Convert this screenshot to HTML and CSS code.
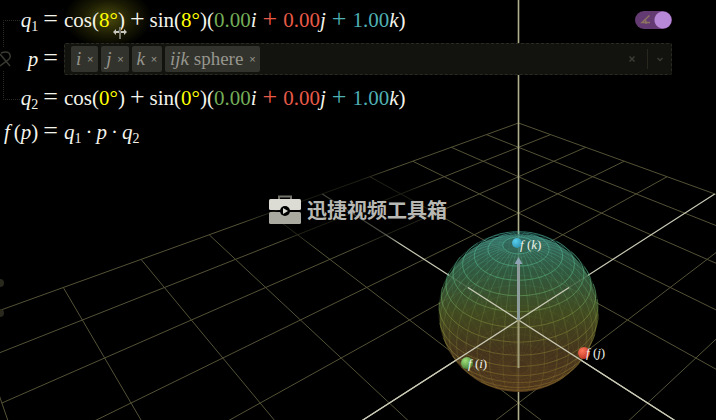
FILE: index.html
```html
<!DOCTYPE html>
<html lang="en">
<head>
<meta charset="utf-8">
<title>Quaternion explorer</title>
<link rel="stylesheet" href="styles.css">
</head>
<body>
<svg class="scene" viewBox="0 0 716 420" preserveAspectRatio="xMidYMid slice" aria-hidden="true">
  <defs>
    <linearGradient id="body" x1="0" y1="0" x2="0" y2="1">
      <stop offset="0" stop-color="#3a7a70"/>
      <stop offset="0.25" stop-color="#386446"/>
      <stop offset="0.5" stop-color="#4a5424"/>
      <stop offset="0.75" stop-color="#4e3a20"/>
      <stop offset="1" stop-color="#5a3e20"/>
    </linearGradient>
    <linearGradient id="wire" gradientUnits="userSpaceOnUse" x1="0" y1="233" x2="0" y2="392">
      <stop offset="0" stop-color="#4fc0b0"/>
      <stop offset="0.3" stop-color="#5fbf80"/>
      <stop offset="0.55" stop-color="#86903a"/>
      <stop offset="1" stop-color="#8a6a28"/>
    </linearGradient>
    <radialGradient id="green" cx="0.35" cy="0.3" r="0.8">
      <stop offset="0" stop-color="#a0e07c"/><stop offset="1" stop-color="#3f7a30"/>
    </radialGradient>
    <radialGradient id="red" cx="0.35" cy="0.3" r="0.8">
      <stop offset="0" stop-color="#ff7a5c"/><stop offset="1" stop-color="#b82c1c"/>
    </radialGradient>
    <radialGradient id="blue" cx="0.35" cy="0.3" r="0.8">
      <stop offset="0" stop-color="#58d0f0"/><stop offset="1" stop-color="#2c8ca8"/>
    </radialGradient>
    <radialGradient id="shade">
      <stop offset="0" stop-opacity="0.75"/><stop offset="0.7" stop-opacity="0.6"/><stop offset="1" stop-opacity="0"/>
    </radialGradient>
  </defs>
  <path id="grid" class="grid"/>
  <path id="axes" class="axis"/>
  <ellipse cx="345" cy="208" rx="110" ry="42" fill="url(#shade)"/>
  <path id="pole" class="pole"/>
  <circle class="ball" cx="518.5" cy="313" r="79"/>
  <path id="wireBack" class="wire wire-back"/>
  <path id="wireRings" class="wire wire-rings"/>
  <path id="wireLines" class="wire wire-lines"/>
  <path id="inner" class="axis"/>
  <path class="arrow" d="M518.5 320V263"/>
  <path class="arrow-tip" d="M518.5 257l4 7h-8z"/>
  <path class="stem" d="M518.5 320V368"/>
  <circle cx="467" cy="363" r="6" fill="url(#green)"/>
  <circle cx="584" cy="353" r="6" fill="url(#red)"/>
  <circle cx="517" cy="243" r="5" fill="url(#blue)"/>
  <g class="point-label">
    <text x="468" y="368"><tspan class="it">f</tspan> (<tspan class="it">i</tspan>)</text>
    <text x="586" y="357"><tspan class="it">f</tspan> (<tspan class="it">j</tspan>)</text>
    <text x="520" y="249"><tspan class="it">f</tspan> (<tspan class="it">k</tspan>)</text>
  </g>
</svg>

<div class="halo"></div>
<main class="panel">
  <div class="row">
    <span class="lhs"><i>q</i><sub>1</sub><span class="eq">=</span></span>
    <span class="rhs">cos(<span class="angle">8°</span>)<span class="op">+</span>sin(<span class="angle">8°</span>)(<span class="ci">0.00</span><i>i</i><span class="op cj">+</span><span class="cj">0.00</span><i>j</i><span class="op ck">+</span><span class="ck">1.00</span><i>k</i>)</span>
    <label class="switch">
      <input type="checkbox" checked aria-label="Show angles">
      <svg viewBox="0 0 12 12" aria-hidden="true"><path d="M9.500 1.500L2 8.500H10M5 5.500Q6.500 7 6 10"/></svg>
    </label>
  </div>
  <div class="row">
    <span class="lhs"><i>p</i><span class="eq">=</span></span>
    <div class="picker">
      <span class="tag"><i>i</i><button type="button" aria-label="Remove i">×</button></span>
      <span class="tag"><i>j</i><button type="button" aria-label="Remove j">×</button></span>
      <span class="tag"><i>k</i><button type="button" aria-label="Remove k">×</button></span>
      <span class="tag"><span><i>ijk</i> sphere</span><button type="button" aria-label="Remove ijk sphere">×</button></span>
      <input class="entry" type="text" aria-label="Points">
      <button class="tool" type="button" aria-label="Clear all"><svg viewBox="0 0 8 8"><path d="M1.500 1.500l5 5M6.500 1.500l-5 5"/></svg></button>
      <button class="tool drop" type="button" aria-label="Open list"><svg viewBox="0 0 8 8"><path d="M1.500 3l2.500 2.500L6.500 3"/></svg></button>
    </div>
  </div>
  <div class="row">
    <span class="lhs"><i>q</i><sub>2</sub><span class="eq">=</span></span>
    <span class="rhs">cos(<span class="angle">0°</span>)<span class="op">+</span>sin(<span class="angle">0°</span>)(<span class="ci">0.00</span><i>i</i><span class="op cj">+</span><span class="cj">0.00</span><i>j</i><span class="op ck">+</span><span class="ck">1.00</span><i>k</i>)</span>
  </div>
  <div class="row short">
    <span class="lhs"><i class="fn">f</i>(<i>p</i>)<span class="eq">=</span></span>
    <span class="rhs"><i>q</i><sub>1</sub><span class="dot">·</span><i>p</i><span class="dot">·</span><i>q</i><sub>2</sub></span>
  </div>
</main>

<svg class="link" viewBox="0 0 22 104" aria-hidden="true">
  <path class="bracket" d="M20 20.500H3.500V48M3.500 71V99.500H20"/>
  <path class="chain" d="M1 53q5-2 8 0q3 4-1 7L0 66M0 54l10 12"/>
</svg>
<svg class="edge" viewBox="0 0 5 40" aria-hidden="true"><circle cx="0" cy="5" r="4"/><circle cx="0" cy="35" r="4"/></svg>
<svg class="cursor" viewBox="0 0 14 12" aria-hidden="true"><path d="M0 5l3-3v2h3v2H3v2zM14 5l-3-3v2H8v2h3v2z"/><path d="M6 0h2v12H6z"/></svg>

<div class="watermark">
  <svg viewBox="0 0 32 30" aria-hidden="true">
    <path class="handle" d="M10 5V1.500H22V5"/>
    <rect class="lid" y="4" width="32" height="11" rx="1.500"/>
    <rect class="case" y="17" width="32" height="12" rx="1.500"/>
    <circle cx="16" cy="16" r="5"/>
    <path class="lid" d="M14 13l5 3-5 3z"/>
  </svg>
  <span lang="zh">迅捷视频工具箱</span>
</div>
<script src="script.js"></script>
</body>
</html>
```
FILE: styles.css
```css
* { box-sizing: border-box; }

body {
  position: relative;
  min-height: 100vh;
  margin: 0;
  overflow: hidden;
  background: #000;
  color: #f4f4ec;
  font: 21px/30px "Liberation Serif", serif;
}

button, input { margin: 0; padding: 0; border: 0; background: none; color: inherit; font: inherit; }

.scene { position: absolute; inset: 0; width: 100%; height: 100%; }
.grid { fill: none; stroke: #545236; stroke-width: 1; }
.axis { fill: none; stroke: #c8c8b4; stroke-width: 1.2; }
.pole { fill: none; stroke: #b0b08c; stroke-width: 1.6; }
.stem { stroke: #a09c78; stroke-width: 2; }
.ball { fill: url(#body); fill-opacity: 0.88; }
.wire { fill: none; stroke: url(#wire); stroke-width: 0.8; }
.wire-back { opacity: 0.12; }
.wire-rings { opacity: 0.65; }
.wire-lines { opacity: 0.32; }
.arrow { stroke: #8f9c9c; stroke-width: 3; }
.arrow-tip { fill: #8fa4b4; }
.point-label { fill: #f0f0e8; font-size: 13px; }
.it { font-style: italic; }

.halo { position: absolute; left: 60px; top: 0; width: 104px; height: 44px; background: radial-gradient(44px 30px at 48px 18px, #4c4c0c, #1c1c04 55%, transparent); }

.panel { position: relative; padding-right: 44px; }
.row { display: grid; grid-template-columns: 58px 1fr auto; column-gap: 6px; align-items: center; height: 39px; }
.row.short { height: 30px; }
.lhs, .rhs { white-space: nowrap; }
.lhs { display: flex; justify-content: flex-end; align-items: baseline; }
.eq { margin-left: 5px; font-size: 26px; line-height: 20px; }
.fn { margin-right: 4px; }
.op { margin: 0 5px; font-size: 26px; line-height: 20px; }
.op.cj, .op.ck { margin: 0 6px; }
.dot { margin: 0 4px; }
sub { font-size: 14px; line-height: 0; vertical-align: -4px; }
.lhs sub { position: relative; top: 4px; }
.angle { color: #ffff00; }
.ci { color: #74ad58; }
.cj { color: #e85a48; }
.ck { color: #4fb0b4; }

.switch { position: relative; display: flex; }
.switch input { appearance: none; width: 37px; height: 18px; border-radius: 9px; background: radial-gradient(circle at 28px 9px, #b888d8 8px, transparent 9px), #643a72; }
.switch svg { position: absolute; left: 5px; top: 3px; width: 12px; height: 12px; fill: none; stroke: #8c7460; stroke-width: 1.5; }

.picker { grid-column: 2 / 4; display: flex; align-items: center; gap: 3px; height: 32px; padding-left: 6px; border: 1px dashed #2a2a20; border-radius: 2px; background: #12120f; }
.tag { display: flex; align-items: center; gap: 5px; height: 26px; padding: 0 4px 0 5px; border-radius: 2px; background: #33332d; color: #96968e; font-size: 19px; white-space: nowrap; }
.tag button { width: 8px; font: 11px/12px "Liberation Sans", sans-serif; }
.entry { flex: 1; min-width: 0; }
.tool { display: flex; align-items: center; justify-content: center; width: 24px; height: 20px; }
.drop { border-left: 1px solid #28281e; }
.tool svg { width: 8px; height: 8px; fill: none; stroke: #3c3c34; stroke-width: 1.5; }

.link { position: absolute; left: 0; top: 0; width: 22px; height: 104px; fill: none; }
.bracket { stroke: #2c2c24; stroke-dasharray: 1 1; }
.chain { stroke: #3a3a32; stroke-width: 1.5; }
.edge { position: absolute; left: 0; top: 278px; width: 5px; height: 40px; fill: #28281c; }
.cursor { position: absolute; left: 113px; top: 27px; width: 14px; height: 12px; fill: #c8c8c0; }
.cursor path + path { fill: #77776c; }

.watermark { position: absolute; inset: 0; display: flex; align-items: center; justify-content: center; gap: 6px; color: #b8b8b4; font: 700 20px/30px "Noto Sans CJK SC", sans-serif; pointer-events: none; }
.watermark svg { width: 32px; height: 30px; }
.handle { fill: none; stroke: #73736c; stroke-width: 2; }
.lid { fill: #dcdcd4; }
.case { fill: #aaaaa0; }
```
FILE: script.js
```js
// Perspective projection. s runs towards the viewer, t to the right, z up.
const project = (s, t, z) => {
  const depth = 12.84 - s - 1.187 * z;
  return [518.5 + 700 * t / depth, 320 + (450 * s - 758 * z) / depth];
};
const onFloor = (u, v) => project(u + v, u - v, 0);
const point = ([x, y]) => x.toFixed(1) + " " + y.toFixed(1);
const line = (a, b) => "M" + point(a) + "L" + point(b);
const draw = (id, d) => document.getElementById(id).setAttribute("d", d);

let grid = "";
for (let n = -5; n <= 5; n++) {
  if (n === 0) continue;
  grid += line(onFloor(n, -5), onFloor(n, 5)) + line(onFloor(-5, n), onFloor(5, n));
}
draw("grid", grid);
draw("axes", line(onFloor(-5, 0), onFloor(5, 0)) + line(onFloor(0, -5), onFloor(0, 5)));
draw("inner", line(onFloor(-1, 0), onFloor(3, 0)) + line(onFloor(0, -1), onFloor(0, 3)));
draw("pole", "M518.5 0V420");

// Unit sphere turned by 8 degrees, then projected stereographically.
const rad = Math.PI / 180;
const sin8 = Math.sin(8 * rad), cos8 = Math.cos(8 * rad);
const onSphere = (lat, lon) => {
  const k = 1 / (1 - sin8 * Math.sin(lat * rad));
  const rho = Math.cos(lat * rad) * k;
  const a = (lon + 8) * rad;
  const s = Math.SQRT2 * rho * Math.cos(a);
  const t = Math.SQRT2 * rho * Math.sin(a);
  const z = cos8 * Math.sin(lat * rad) * k;
  // A point faces the viewer when its normal leans towards the camera.
  const front = 0.766 * s / Math.SQRT2 + 0.643 * (z - 0.14) > 0.14;
  return { at: project(s, t, z), front };
};
const parts = { wireRings: "", wireLines: "", wireBack: "" };
const segment = (name, a, b) => { parts[a.front ? name : "wireBack"] += line(a.at, b.at); };
for (let lat = -81; lat <= 81; lat += 9)
  for (let lon = 0; lon < 360; lon += 6) segment("wireRings", onSphere(lat, lon), onSphere(lat, lon + 6));
for (let lon = 0; lon < 360; lon += 9)
  for (let lat = -81; lat < 81; lat += 6) segment("wireLines", onSphere(lat, lon), onSphere(lat + 6, lon));
for (const name in parts) draw(name, parts[name]);
```
